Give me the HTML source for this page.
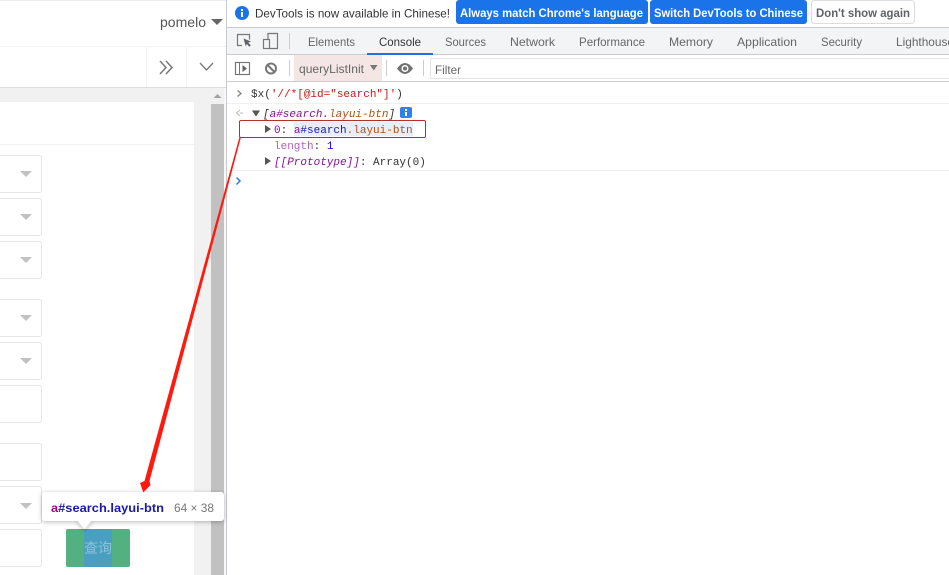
<!DOCTYPE html>
<html><head><meta charset="utf-8"><style>
html,body{margin:0;padding:0;width:949px;height:575px;overflow:hidden;background:#fff}
svg{display:block}
.s{font-family:"Liberation Sans",sans-serif;font-size:12px;fill:#666}
.m{font-family:"Liberation Mono",monospace;font-size:11px}
</style></head><body>
<svg xmlns="http://www.w3.org/2000/svg" width="949" height="575" viewBox="0 0 949 575">
<defs><filter id="sh" x="-10%" y="-30%" width="120%" height="180%"><feDropShadow dx="0" dy="1" stdDeviation="2.5" flood-color="#000" flood-opacity=".28"/></filter></defs>
<rect width="949" height="575" fill="#fff"/>
<!-- left page -->
<rect x="0" y="0" width="226" height="1" fill="#ececec"/>
<text x="160" y="27" font-family="Liberation Sans,sans-serif" font-size="14" fill="#555" textLength="46" lengthAdjust="spacingAndGlyphs">pomelo</text>
<path d="M211 19h12l-6 6z" fill="#666"/>
<rect x="0" y="46" width="226" height="1" fill="#f2f2f2"/>
<rect x="146" y="47" width="1" height="40" fill="#f3f3f3"/>
<rect x="186" y="47" width="1" height="40" fill="#f3f3f3"/>
<path d="M160 61l6 6.500-6 6.500M166 61l6 6.500-6 6.500" fill="none" stroke="#777" stroke-width="1.500"/>
<path d="M200 63l6.500 7 6.500-7" fill="none" stroke="#777" stroke-width="1.300"/>
<rect x="0" y="87" width="226" height="1" fill="#dcdcdc"/>
<rect x="0" y="88" width="226" height="487" fill="#f1f1f1"/>
<rect x="0" y="102" width="194" height="473" fill="#fff"/>
<rect x="0" y="144" width="194" height="1" fill="#f3f3f3"/>
<rect x="224" y="88" width="2" height="487" fill="#f8f8f8"/>
<rect x="211" y="104" width="13" height="471" fill="#c1c1c1"/>
<path d="M213.500 98l4-4 4 4z" fill="#a3a3a3"/>
<g fill="#fff" stroke="#e6e6e6">
<rect x="-4" y="155.500" width="45.500" height="37" rx="2"/>
<rect x="-4" y="198.500" width="45.500" height="37" rx="2"/>
<rect x="-4" y="241.500" width="45.500" height="37" rx="2"/>
<rect x="-4" y="299.500" width="45.500" height="37" rx="2"/>
<rect x="-4" y="342.500" width="45.500" height="37" rx="2"/>
<rect x="-4" y="385.500" width="45.500" height="37" rx="2"/>
<rect x="-4" y="443.500" width="45.500" height="37" rx="2"/>
<rect x="-4" y="486.500" width="45.500" height="37" rx="2"/>
<rect x="-4" y="529.500" width="45.500" height="37" rx="2"/>
</g>
<g fill="#c2c2c2">
<path d="M20 171h12l-6 6z"/><path d="M20 214h12l-6 6z"/><path d="M20 257h12l-6 6z"/>
<path d="M20 315h12l-6 6z"/><path d="M20 358h12l-6 6z"/><path d="M20 503h12l-6 6z"/>
</g>
<!-- button -->
<rect x="66" y="529" width="64" height="38" rx="2" fill="#52b081"/>
<rect x="84" y="529" width="28" height="38" fill="#4a9fc0"/>
<text x="84" y="553" font-family="Liberation Sans,Noto Sans CJK SC,sans-serif" font-size="14" fill="#8cc3dc">查询</text>
<!-- devtools -->
<rect x="226" y="0" width="723" height="575" fill="#fff"/>
<rect x="226" y="0" width="1" height="575" fill="#c9cad0"/>
<circle cx="242" cy="13" r="7" fill="#1a73e8"/>
<rect x="241" y="12" width="2" height="5" fill="#fff"/><rect x="241" y="9" width="2" height="2" fill="#fff"/>
<text class="s" x="255" y="17.500" style="fill:#333" textLength="195" lengthAdjust="spacingAndGlyphs">DevTools is now available in Chinese!</text>
<rect x="456" y="0" width="192" height="24" rx="3" fill="#1a73e8"/>
<rect x="650" y="0" width="157" height="24" rx="3" fill="#1a73e8"/>
<rect x="811.500" y="0.500" width="103" height="23" rx="3" fill="#fff" stroke="#dadce0"/>
<g font-family="Liberation Sans,sans-serif" font-size="12" font-weight="bold">
<text x="460" y="17" fill="#fff" textLength="183" lengthAdjust="spacingAndGlyphs">Always match Chrome's language</text>
<text x="654" y="17" fill="#fff" textLength="149" lengthAdjust="spacingAndGlyphs">Switch DevTools to Chinese</text>
<text x="816" y="17" fill="#5f6368" textLength="94" lengthAdjust="spacingAndGlyphs">Don't show again</text>
</g>
<rect x="227" y="27" width="722" height="1" fill="#ccc"/>
<rect x="227" y="28" width="722" height="26" fill="#f3f4f6"/>
<rect x="227" y="54" width="722" height="1" fill="#ccc"/>
<rect x="367" y="53" width="66" height="2" fill="#1a73e8"/>
<!-- inspect icons -->
<path d="M242 45.500h-4.500v-11h12v5" fill="none" stroke="#777" stroke-width="1.200"/>
<path d="M243.500 38.500l7.500 3-2.800 1.200 2.600 2.600-1.500 1.400-2.500-2.700-1.100 2.300z" fill="#5f6368"/>
<path d="M268 39v-5.500h9.500v15h-8" fill="none" stroke="#777" stroke-width="1.200"/>
<rect x="263.500" y="39.500" width="6" height="9" fill="#f3f4f6" stroke="#777" stroke-width="1.200"/>
<rect x="289" y="33" width="1" height="16" fill="#ccc"/>
<g>
<text class="s" x="308" y="46" textLength="47" lengthAdjust="spacingAndGlyphs">Elements</text>
<text class="s" x="379" y="46" style="fill:#333" textLength="42" lengthAdjust="spacingAndGlyphs">Console</text>
<text class="s" x="445" y="46" textLength="41" lengthAdjust="spacingAndGlyphs">Sources</text>
<text class="s" x="510" y="46" textLength="45" lengthAdjust="spacingAndGlyphs">Network</text>
<text class="s" x="579" y="46" textLength="66" lengthAdjust="spacingAndGlyphs">Performance</text>
<text class="s" x="669" y="46" textLength="44" lengthAdjust="spacingAndGlyphs">Memory</text>
<text class="s" x="737" y="46" textLength="60" lengthAdjust="spacingAndGlyphs">Application</text>
<text class="s" x="821" y="46" textLength="41" lengthAdjust="spacingAndGlyphs">Security</text>
<text class="s" x="896" y="46" textLength="58" lengthAdjust="spacingAndGlyphs">Lighthouse</text>
</g>
<!-- toolbar -->
<rect x="227" y="55" width="722" height="26" fill="#fff"/>
<rect x="227" y="81" width="722" height="1" fill="#ccc"/>
<rect x="294" y="55" width="88" height="26" fill="#f3e6e4"/>
<rect x="235.500" y="62.500" width="14" height="12" fill="none" stroke="#777" stroke-width="1.200"/>
<rect x="239" y="62" width="1" height="13" fill="#777"/>
<path d="M242.500 65l4.500 3.500-4.500 3.500z" fill="#5f6368"/>
<circle cx="271" cy="68.500" r="5" fill="none" stroke="#777" stroke-width="2"/>
<path d="M267.500 65l7 7" stroke="#777" stroke-width="2"/>
<rect x="289" y="60" width="1" height="16" fill="#ccc"/>
<text class="s" x="299" y="73" textLength="65" lengthAdjust="spacingAndGlyphs">queryListInit</text>
<path d="M370 65h7.500l-3.750 5.500z" fill="#777"/>
<rect x="386" y="60" width="1" height="16" fill="#ccc"/>
<path d="M397 68.500q8-11 16 0q-8 11-16 0z" fill="#707070"/>
<circle cx="405" cy="68.500" r="3.500" fill="#fff"/><circle cx="405" cy="68.500" r="2" fill="#707070"/>
<rect x="423" y="60" width="1" height="16" fill="#ccc"/>
<rect x="430.500" y="58.500" width="530" height="20" fill="#fff" stroke="#e3e3e3"/>
<text class="s" x="435" y="74" textLength="26" lengthAdjust="spacingAndGlyphs">Filter</text>
<!-- console -->
<path d="M237.500 90.500l3.500 3-3.500 3" fill="none" stroke="#888" stroke-width="1.400"/>
<text class="m" x="251" y="97" fill="#333">$x(<tspan fill="#c41a16">'//*[@id="search"]'</tspan>)</text>
<rect x="227" y="103" width="722" height="1" fill="#f0f0f0"/>
<path d="M240 110l-3.500 3 3.500 3M243 113h-3" fill="none" stroke="#bbb" stroke-width="1"/>
<path d="M252 110.500h8l-4 6z" fill="#555"/>
<text class="m" x="263" y="117" font-style="italic" fill="#333">[<tspan fill="#881391">a#search.</tspan><tspan fill="#a6541a">layui-btn</tspan>]</text>
<rect x="400" y="107" width="12" height="11" rx="2" fill="#2f80e8"/>
<rect x="405" y="112" width="2" height="4" fill="#fff"/><rect x="405" y="109" width="2" height="2" fill="#fff"/>
<rect x="294" y="122" width="119" height="14" fill="#e8eef7"/>
<path d="M265 125v8l6-4z" fill="#555"/>
<text class="m" x="274" y="133" fill="#881391">0<tspan fill="#333">: </tspan><tspan fill="#881391">a</tspan><tspan fill="#1a1aa6">#search</tspan><tspan fill="#a6541a">.layui-btn</tspan></text>
<rect x="239.500" y="120.500" width="186" height="17" rx="1.500" fill="none" stroke="#b5302a" stroke-width="1"/>
<text class="m" x="274" y="149" fill="#b061b8">length<tspan fill="#333">: </tspan><tspan fill="#1c00cf">1</tspan></text>
<path d="M265 157v8l6-4z" fill="#555"/>
<text class="m" x="274" y="165" fill="#333"><tspan font-style="italic" fill="#881391">[[Prototype]]</tspan>: Array(0)</text>
<rect x="227" y="170" width="722" height="1" fill="#f0f0f0"/>
<path d="M236.500 177.500l3.500 3.500-3.500 3.500" fill="none" stroke="#2f7be5" stroke-width="1.500"/>
<!-- tooltip -->
<path d="M76 520h17l-8.500 9z" fill="#fff" filter="url(#sh)"/>
<rect x="42" y="492" width="182" height="29" rx="3" fill="#fff" filter="url(#sh)"/>
<path d="M76 519h17l-8.500 9z" fill="#fff"/>
<text x="51" y="512" font-family="Liberation Sans,sans-serif" font-size="12" font-weight="bold" textLength="113" lengthAdjust="spacingAndGlyphs"><tspan fill="#881280">a</tspan><tspan fill="#1a1aa6">#search.layui-btn</tspan></text>
<text x="174" y="512" font-family="Liberation Sans,sans-serif" font-size="12" fill="#777" textLength="40" lengthAdjust="spacingAndGlyphs">64 × 38</text>
<!-- arrow -->
<path d="M239.500 137L241 137L149.500 481L150.500 485L143.300 492.500L140 483L144.500 481z" fill="#ff1a0d"/>
</svg>
</body></html>
